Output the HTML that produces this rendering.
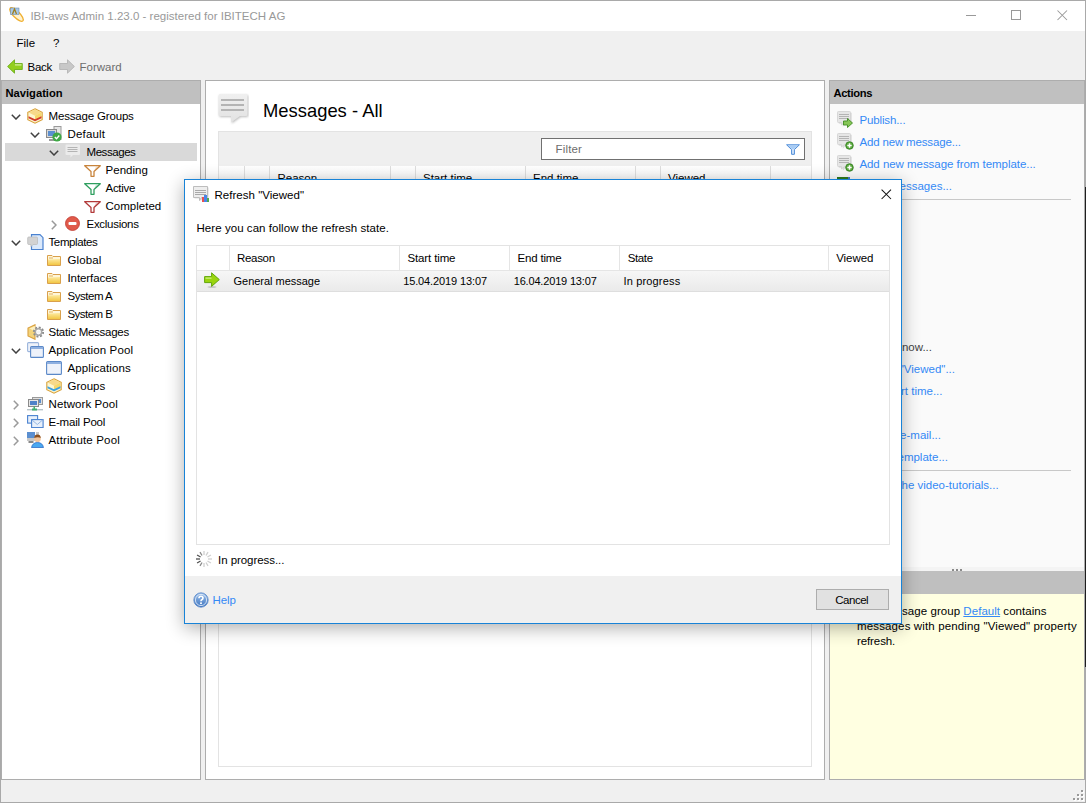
<!DOCTYPE html>
<html><head><meta charset="utf-8">
<style>
*{box-sizing:border-box;margin:0;padding:0}
html,body{width:1086px;height:803px;overflow:hidden}
body{position:relative;background:#f0f0f0;font-family:"Liberation Sans",sans-serif;font-size:11.5px;color:#000}
.a{position:absolute;display:block}
.t{position:absolute;white-space:nowrap;line-height:14px}
</style></head><body>
<div class="a" style="left:0px;top:0px;width:1086px;height:803px;border:1px solid #a9a9a9"></div>
<div class="a" style="left:1px;top:1px;width:1084px;height:30px;background:#fff"></div>
<svg class="a" style="left:8px;top:6px" width="17" height="17" viewBox="0 0 17 17"><ellipse cx="8.5" cy="8.5" rx="9" ry="3.2" transform="rotate(45 8.5 8.5)" fill="#fff2d0" stroke="#f0b030" stroke-width="1.3"/><rect x="2.5" y="2" width="8.5" height="6.5" fill="#a8c8e8" stroke="#6080a0" stroke-width="0.5"/><path d="M4.5 8 L6.5 3 L8.5 8" fill="none" stroke="#a08020" stroke-width="1.3"/></svg>
<div class="t" style="left:30.4px;top:9.02px;font-size:11.5px;line-height:14px;color:#999;letter-spacing:0.013px;">IBI-aws Admin 1.23.0 - registered for IBITECH AG</div>
<div class="a" style="left:966px;top:15px;width:10px;height:1px;background:#999"></div>
<div class="a" style="left:1011px;top:10px;width:10px;height:10px;border:1px solid #999"></div>
<svg class="a" style="left:1057px;top:10px" width="11" height="11" viewBox="0 0 11 11"><path d="M0.5 0.5 L10 10 M10 0.5 L0.5 10" stroke="#999" stroke-width="1.05"/></svg>
<div class="t" style="left:16.5px;top:36.02px;font-size:11.5px;line-height:14px;">File</div>
<div class="t" style="left:53px;top:36.02px;font-size:11.5px;line-height:14px;">?</div>
<svg class="a" style="left:7px;top:59px" width="16" height="15" viewBox="0 0 16 15"><path d="M0.6 7.5 L7.5 0.8 L7.5 4.5 L15.3 4.5 L15.3 10.5 L7.5 10.5 L7.5 14.2 Z" fill="#93cf1e" stroke="#62a812" stroke-width="0.8"/><rect x="8" y="5.3" width="6.5" height="1.2" fill="#d8f0a8"/></svg>
<div class="t" style="left:27.5px;top:60.02px;font-size:11.5px;line-height:14px;;letter-spacing:-0.270px;">Back</div>
<svg class="a" style="left:59px;top:59px" width="16" height="15" viewBox="0 0 16 15"><path d="M15.4 7.5 L8.5 0.8 L8.5 4.5 L0.7 4.5 L0.7 10.5 L8.5 10.5 L8.5 14.2 Z" fill="#c8c8c8" stroke="#b0b0b0" stroke-width="0.8"/></svg>
<div class="t" style="left:79.5px;top:60.02px;font-size:11.5px;line-height:14px;color:#6d6d6d;letter-spacing:0.002px;">Forward</div>
<div class="a" style="left:1px;top:80px;width:200px;height:700px;border:1px solid #adadad;background:#fff"></div>
<div class="a" style="left:2px;top:81px;width:198px;height:23px;background:#c0c0c0"></div>
<div class="t" style="left:5.5px;top:86.12px;font-size:11.2px;line-height:14px;font-weight:bold;;letter-spacing:-0.010px;">Navigation</div>
<div class="a" style="left:5px;top:143px;width:192px;height:18px;background:#d9d9d9"></div>
<svg class="a" style="left:10.5px;top:114px" width="10" height="6" viewBox="0 0 10 6"><path d="M0.8 0.8 L5 5 L9.2 0.8" fill="none" stroke="#404040" stroke-width="1.5"/></svg>
<svg class="a" style="left:27px;top:108px" width="16" height="16" viewBox="0 0 16 16"><path d="M8 0.8 L15.2 4.3 L15.2 11.7 L8 15.2 L0.8 11.7 L0.8 4.3 Z" fill="#fdf6d0" stroke="#d8a23c" stroke-width="1.1"/><path d="M1.6 4.6 L8 7.8 L14.4 4.6 L8 1.6 Z" fill="#f7d98a"/><path d="M8 7.8 L14.4 4.6 L14.4 9 L8 12 Z" fill="#f4cf50" opacity="0.8"/><path d="M1.5 8.3 L8 11.3 L14.5 8.3 L14.5 10.2 L8 13.2 L1.5 10.2 Z" fill="#d23a2a"/></svg>
<div class="t" style="left:48.5px;top:109.02px;font-size:11.5px;line-height:14px;;letter-spacing:-0.170px;">Message Groups</div>
<svg class="a" style="left:29.5px;top:132px" width="10" height="6" viewBox="0 0 10 6"><path d="M0.8 0.8 L5 5 L9.2 0.8" fill="none" stroke="#404040" stroke-width="1.5"/></svg>
<svg class="a" style="left:46px;top:126px" width="16" height="16" viewBox="0 0 16 16"><rect x="8" y="0.5" width="7" height="13" fill="#e6e6e6" stroke="#9a9a9a"/><rect x="0.5" y="3.5" width="10" height="8" fill="#d8d8d8" stroke="#8a8a8a"/><rect x="2" y="5" width="7" height="5" fill="#5b8fd0"/><rect x="3" y="13" width="6" height="2" fill="#9a9a9a"/><circle cx="11" cy="11" r="4.6" fill="#3fa845"/><path d="M8.8 11 L10.5 12.7 L13.3 9.5" fill="none" stroke="#fff" stroke-width="1.3"/></svg>
<div class="t" style="left:67.5px;top:127.02px;font-size:11.5px;line-height:14px;;letter-spacing:0.166px;">Default</div>
<svg class="a" style="left:48.5px;top:150px" width="10" height="6" viewBox="0 0 10 6"><path d="M0.8 0.8 L5 5 L9.2 0.8" fill="none" stroke="#404040" stroke-width="1.5"/></svg>
<svg class="a" style="left:65px;top:144px" width="17" height="16" viewBox="0 0 17 16"><path d="M1.5 2 Q1.5 1 2.5 1 L15 1 Q16 1 16 2 L16 11 Q16 12 15 12 L9 12 L6.5 14.5 L6.5 12 L2.5 12 Q1.5 12 1.5 11 Z" fill="#d8d8d8" opacity="0.6"/><path d="M0.5 1.5 Q0.5 0.5 1.5 0.5 L14 0.5 Q15 0.5 15 1.5 L15 10 Q15 11 14 11 L8 11 L5.5 13.5 L5.5 11 L1.5 11 Q0.5 11 0.5 10 Z" fill="#ebebeb"/><rect x="2.5" y="3" width="10" height="1" fill="#b4b4b4"/><rect x="2.5" y="5" width="10" height="1" fill="#b4b4b4"/><rect x="2.5" y="7" width="10" height="1" fill="#b4b4b4"/></svg>
<div class="t" style="left:86.5px;top:145.02px;font-size:11.5px;line-height:14px;;letter-spacing:-0.440px;">Messages</div>
<svg class="a" style="left:83.5px;top:165px" width="17" height="12" viewBox="0 0 17 12"><path d="M0.7 0.7 L16.3 0.7 L10 6.5 L10 11.3 L7 11.3 L7 6.5 Z" fill="#fff" stroke="#c8843c" stroke-width="1.3" stroke-linejoin="round"/><path d="M12 1.5 L15 1.5 L10 6 Z" fill="#c8843c" opacity="0.25"/></svg>
<div class="t" style="left:105.5px;top:163.02px;font-size:11.5px;line-height:14px;;letter-spacing:0.040px;">Pending</div>
<svg class="a" style="left:83.5px;top:183px" width="17" height="12" viewBox="0 0 17 12"><path d="M0.7 0.7 L16.3 0.7 L10 6.5 L10 11.3 L7 11.3 L7 6.5 Z" fill="#fff" stroke="#2f9f5f" stroke-width="1.3" stroke-linejoin="round"/><path d="M12 1.5 L15 1.5 L10 6 Z" fill="#2f9f5f" opacity="0.25"/></svg>
<div class="t" style="left:105.5px;top:181.02px;font-size:11.5px;line-height:14px;;letter-spacing:-0.288px;">Active</div>
<svg class="a" style="left:83.5px;top:201px" width="17" height="12" viewBox="0 0 17 12"><path d="M0.7 0.7 L16.3 0.7 L10 6.5 L10 11.3 L7 11.3 L7 6.5 Z" fill="#fff" stroke="#b23a3a" stroke-width="1.3" stroke-linejoin="round"/><path d="M12 1.5 L15 1.5 L10 6 Z" fill="#b23a3a" opacity="0.25"/></svg>
<div class="t" style="left:105.5px;top:199.02px;font-size:11.5px;line-height:14px;;letter-spacing:0.019px;">Completed</div>
<svg class="a" style="left:51.0px;top:220px" width="6" height="10" viewBox="0 0 6 10"><path d="M0.8 0.8 L5 5 L0.8 9.2" fill="none" stroke="#9a9a9a" stroke-width="1.5"/></svg>
<svg class="a" style="left:65px;top:216px" width="16" height="16" viewBox="0 0 16 16"><circle cx="7.5" cy="7.5" r="7" fill="#e05a4a" stroke="#c03a30" stroke-width="0.8"/><rect x="3.5" y="6" width="8" height="3" rx="1" fill="#fff"/></svg>
<div class="t" style="left:86.5px;top:217.02px;font-size:11.5px;line-height:14px;;letter-spacing:-0.287px;">Exclusions</div>
<svg class="a" style="left:10.5px;top:240px" width="10" height="6" viewBox="0 0 10 6"><path d="M0.8 0.8 L5 5 L9.2 0.8" fill="none" stroke="#404040" stroke-width="1.5"/></svg>
<svg class="a" style="left:27px;top:234px" width="17" height="17" viewBox="0 0 17 17"><path d="M4.5 0.7 L13 0.7 L16 3.7 L16 15.5 L4.5 15.5 Z" fill="#dbe9fb" stroke="#4a82d0" stroke-width="1.2"/><path d="M0.7 4 Q0.7 3 1.7 3 L9.5 3 Q10.5 3 10.5 4 L10.5 9.5 Q10.5 10.5 9.5 10.5 L6 10.5 L4 12.5 L4 10.5 L1.7 10.5 Q0.7 10.5 0.7 9.5 Z" fill="#d2d2d2" stroke="#bdbdbd" stroke-width="0.8"/></svg>
<div class="t" style="left:48.5px;top:235.02px;font-size:11.5px;line-height:14px;;letter-spacing:-0.380px;">Templates</div>
<svg class="a" style="left:46.5px;top:255px" width="15" height="12" viewBox="0 0 15 12"><defs><linearGradient id="fg" x1="0" y1="0" x2="0" y2="1"><stop offset="0" stop-color="#fdeaa0"/><stop offset="1" stop-color="#f2c644"/></linearGradient></defs><path d="M0.5 0.5 L5 0.5 L6 1.5 L13.5 1.5 L13.5 10.5 L0.5 10.5 Z" fill="#fff6d8" stroke="#d9a04c" stroke-width="1"/><rect x="2" y="2.5" width="4" height="1" fill="#e0b060"/><path d="M1 4.5 L13 4 L13 10 L1 10 Z" fill="url(#fg)"/></svg>
<div class="t" style="left:67.5px;top:253.02px;font-size:11.5px;line-height:14px;;letter-spacing:0.092px;">Global</div>
<svg class="a" style="left:46.5px;top:273px" width="15" height="12" viewBox="0 0 15 12"><defs><linearGradient id="fg" x1="0" y1="0" x2="0" y2="1"><stop offset="0" stop-color="#fdeaa0"/><stop offset="1" stop-color="#f2c644"/></linearGradient></defs><path d="M0.5 0.5 L5 0.5 L6 1.5 L13.5 1.5 L13.5 10.5 L0.5 10.5 Z" fill="#fff6d8" stroke="#d9a04c" stroke-width="1"/><rect x="2" y="2.5" width="4" height="1" fill="#e0b060"/><path d="M1 4.5 L13 4 L13 10 L1 10 Z" fill="url(#fg)"/></svg>
<div class="t" style="left:67.5px;top:271.02px;font-size:11.5px;line-height:14px;;letter-spacing:-0.080px;">Interfaces</div>
<svg class="a" style="left:46.5px;top:291px" width="15" height="12" viewBox="0 0 15 12"><defs><linearGradient id="fg" x1="0" y1="0" x2="0" y2="1"><stop offset="0" stop-color="#fdeaa0"/><stop offset="1" stop-color="#f2c644"/></linearGradient></defs><path d="M0.5 0.5 L5 0.5 L6 1.5 L13.5 1.5 L13.5 10.5 L0.5 10.5 Z" fill="#fff6d8" stroke="#d9a04c" stroke-width="1"/><rect x="2" y="2.5" width="4" height="1" fill="#e0b060"/><path d="M1 4.5 L13 4 L13 10 L1 10 Z" fill="url(#fg)"/></svg>
<div class="t" style="left:67.5px;top:289.02px;font-size:11.5px;line-height:14px;;letter-spacing:-0.472px;">System A</div>
<svg class="a" style="left:46.5px;top:309px" width="15" height="12" viewBox="0 0 15 12"><defs><linearGradient id="fg" x1="0" y1="0" x2="0" y2="1"><stop offset="0" stop-color="#fdeaa0"/><stop offset="1" stop-color="#f2c644"/></linearGradient></defs><path d="M0.5 0.5 L5 0.5 L6 1.5 L13.5 1.5 L13.5 10.5 L0.5 10.5 Z" fill="#fff6d8" stroke="#d9a04c" stroke-width="1"/><rect x="2" y="2.5" width="4" height="1" fill="#e0b060"/><path d="M1 4.5 L13 4 L13 10 L1 10 Z" fill="url(#fg)"/></svg>
<div class="t" style="left:67.5px;top:307.02px;font-size:11.5px;line-height:14px;;letter-spacing:-0.552px;">System B</div>
<svg class="a" style="left:27px;top:324px" width="17" height="16" viewBox="0 0 17 16"><path d="M8 0.7 L1 4 L1 12 L8 15.3 Z" fill="#f3d37a" stroke="#d9a040" stroke-width="1.1"/><path d="M8 2 L2.5 4.5 L8 7.5 Z" fill="#fdf0c0"/><circle cx="11.5" cy="8" r="4.4" fill="none" stroke="#8c8c8c" stroke-width="2.4" stroke-dasharray="1.9 1.5"/><circle cx="11.5" cy="8" r="3.2" fill="none" stroke="#a8a8a8" stroke-width="1.5"/><circle cx="11.5" cy="8" r="1.6" fill="#f4f4f4"/></svg>
<div class="t" style="left:48.5px;top:325.02px;font-size:11.5px;line-height:14px;;letter-spacing:-0.258px;">Static Messages</div>
<svg class="a" style="left:10.5px;top:348px" width="10" height="6" viewBox="0 0 10 6"><path d="M0.8 0.8 L5 5 L9.2 0.8" fill="none" stroke="#404040" stroke-width="1.5"/></svg>
<svg class="a" style="left:27px;top:342px" width="17" height="16" viewBox="0 0 17 16"><rect x="0.6" y="0.6" width="11" height="9" rx="1" fill="#eef2fa" stroke="#9ab4dc" stroke-width="1.1"/><rect x="3.6" y="4.6" width="12.8" height="10.8" rx="1" fill="#eef2fa" stroke="#5a88c8" stroke-width="1.1"/><rect x="4" y="5" width="12" height="2" fill="#8fb0e0"/></svg>
<div class="t" style="left:48.5px;top:343.02px;font-size:11.5px;line-height:14px;;letter-spacing:0.138px;">Application Pool</div>
<svg class="a" style="left:46px;top:361px" width="16" height="14" viewBox="0 0 16 14"><rect x="0.6" y="0.6" width="14.8" height="12.8" rx="1" fill="#eef2fa" stroke="#5a88c8" stroke-width="1.1"/><rect x="1" y="1" width="14" height="2" fill="#8fb0e0"/></svg>
<div class="t" style="left:67.5px;top:361.02px;font-size:11.5px;line-height:14px;;letter-spacing:0.115px;">Applications</div>
<svg class="a" style="left:46px;top:378px" width="16" height="16" viewBox="0 0 16 16"><path d="M8 0.8 L15.2 4.3 L15.2 11.7 L8 15.2 L0.8 11.7 L0.8 4.3 Z" fill="#fdf6d0" stroke="#d8a23c" stroke-width="1.1"/><path d="M1.6 4.6 L8 7.8 L14.4 4.6 L8 1.6 Z" fill="#f7d98a"/><path d="M8 7.8 L14.4 4.6 L14.4 9 L8 12 Z" fill="#f4cf50" opacity="0.8"/><path d="M1.5 8.3 L8 11.3 L14.5 8.3 L14.5 10.2 L8 13.2 L1.5 10.2 Z" fill="#3aa0e0"/></svg>
<div class="t" style="left:67.5px;top:379.02px;font-size:11.5px;line-height:14px;;letter-spacing:-0.003px;">Groups</div>
<svg class="a" style="left:13.0px;top:400px" width="6" height="10" viewBox="0 0 6 10"><path d="M0.8 0.8 L5 5 L0.8 9.2" fill="none" stroke="#9a9a9a" stroke-width="1.5"/></svg>
<svg class="a" style="left:27px;top:397px" width="16" height="14" viewBox="0 0 16 14"><rect x="5.5" y="0.5" width="10" height="7" fill="#e0e0e0" stroke="#9a9a9a"/><rect x="7" y="2" width="7" height="4" fill="#5b8fd0"/><rect x="1.5" y="2.5" width="10" height="7" fill="#e6e6e6" stroke="#8a8a8a"/><rect x="3" y="4" width="7" height="4" fill="#4f82c8"/><rect x="0" y="12" width="16" height="1.4" fill="#b8c4c8"/><rect x="5" y="11.5" width="5" height="2" fill="#40b070"/><rect x="6.5" y="9.5" width="1.5" height="3" fill="#40b070"/></svg>
<div class="t" style="left:48.5px;top:397.02px;font-size:11.5px;line-height:14px;;letter-spacing:0.092px;">Network Pool</div>
<svg class="a" style="left:13.0px;top:418px" width="6" height="10" viewBox="0 0 6 10"><path d="M0.8 0.8 L5 5 L0.8 9.2" fill="none" stroke="#9a9a9a" stroke-width="1.5"/></svg>
<svg class="a" style="left:27px;top:415px" width="17" height="13" viewBox="0 0 17 13"><rect x="0.6" y="0.6" width="10" height="7.5" fill="#e8f0fb" stroke="#4a82d0" stroke-width="1.1"/><rect x="4.6" y="4.6" width="11.5" height="8" fill="#e8f0fb" stroke="#4a82d0" stroke-width="1.1"/><path d="M5 5 L10.3 9.5 L15.6 5" fill="none" stroke="#8ab0e0" stroke-width="0.9"/></svg>
<div class="t" style="left:48.5px;top:415.02px;font-size:11.5px;line-height:14px;;letter-spacing:-0.192px;">E-mail Pool</div>
<svg class="a" style="left:13.0px;top:436px" width="6" height="10" viewBox="0 0 6 10"><path d="M0.8 0.8 L5 5 L0.8 9.2" fill="none" stroke="#9a9a9a" stroke-width="1.5"/></svg>
<svg class="a" style="left:27px;top:432px" width="17" height="16" viewBox="0 0 17 16"><rect x="0" y="0" width="8" height="6" fill="#5b8fd0"/><rect x="0" y="6" width="8" height="3" fill="#c8c8c8"/><rect x="1.5" y="9" width="5" height="2" fill="#888"/><rect x="9" y="0" width="3" height="10" fill="#c8c8c8"/><circle cx="10.5" cy="6.8" r="3.3" fill="#f2c49a"/><path d="M7.2 6 Q7.5 2.6 10.5 2.6 Q13.5 2.6 13.8 6 Q11 4.5 7.2 6Z" fill="#8a5020"/><path d="M4.5 15.5 Q5.5 10.5 10.5 10.5 Q15.5 10.5 16.5 15.5 Z" fill="#4aa8f0" stroke="#2060c0" stroke-width="0.7"/></svg>
<div class="t" style="left:48.5px;top:433.02px;font-size:11.5px;line-height:14px;;letter-spacing:0.175px;">Attribute Pool</div>
<div class="a" style="left:205px;top:80px;width:620px;height:700px;border:1px solid #adadad;background:#fff"></div>
<svg class="a" style="left:217px;top:93px" width="32" height="32" viewBox="0 0 32 32"><defs><filter id="sh" x="-20%" y="-20%" width="140%" height="140%"><feGaussianBlur stdDeviation="0.9"/></filter><linearGradient id="bg1" x1="0" y1="0" x2="0" y2="1"><stop offset="0" stop-color="#f0f0f0"/><stop offset="1" stop-color="#e2e2e2"/></linearGradient></defs><path d="M1.5 2.5 Q1.5 1 3 1 L29 1 Q30.5 1 30.5 2.5 L30.5 21.5 Q30.5 23 29 23 L23 23 L14 29.5 L14 23 L3 23 Q1.5 23 1.5 21.5 Z" fill="#bdbdbd" filter="url(#sh)" transform="translate(0.8,1)"/><path d="M1.5 2.5 Q1.5 1 3 1 L29 1 Q30.5 1 30.5 2.5 L30.5 21.5 Q30.5 23 29 23 L23 23 L14 29.5 L14 23 L3 23 Q1.5 23 1.5 21.5 Z" fill="url(#bg1)"/><rect x="4" y="6" width="23" height="2" fill="#b4b4b4"/><rect x="4" y="11" width="23" height="2" fill="#b4b4b4"/><rect x="4" y="16" width="23" height="2" fill="#b4b4b4"/></svg>
<div class="t" style="left:263px;top:99.62px;font-size:18.4px;line-height:22px;;letter-spacing:0.000px;">Messages - All</div>
<div class="a" style="left:218px;top:131px;width:594px;height:636px;border:1px solid #e3e3e3;background:#fff"></div>
<div class="a" style="left:219px;top:132px;width:592px;height:34px;background:#efefef"></div>
<div class="a" style="left:541px;top:138px;width:264px;height:22px;border:1px solid #707070;background:#fff"></div>
<div class="t" style="left:555.6px;top:142.02px;font-size:11.5px;line-height:14px;color:#6d6d6d;;letter-spacing:0.140px;">Filter</div>
<svg class="a" style="left:786px;top:144px" width="14" height="11" viewBox="0 0 14 11"><path d="M0.6 0.8 L13.4 0.8 L8.4 5.6 L8.4 10.3 L5.6 10.3 L5.6 5.6 Z" fill="#d4e6fb" stroke="#4a8ad8" stroke-width="1" stroke-linejoin="round"/><path d="M2 1.5 L12 1.5 L8 5 L6 5Z" fill="#a8ccf4"/></svg>
<div class="a" style="left:219px;top:166px;width:592px;height:25px;background:linear-gradient(#ffffff,#f3f3f3)"></div>
<div class="a" style="left:244px;top:166px;width:1px;height:25px;background:#dedede"></div>
<div class="a" style="left:269px;top:166px;width:1px;height:25px;background:#dedede"></div>
<div class="a" style="left:390px;top:166px;width:1px;height:25px;background:#dedede"></div>
<div class="a" style="left:415px;top:166px;width:1px;height:25px;background:#dedede"></div>
<div class="a" style="left:525px;top:166px;width:1px;height:25px;background:#dedede"></div>
<div class="a" style="left:635px;top:166px;width:1px;height:25px;background:#dedede"></div>
<div class="a" style="left:660px;top:166px;width:1px;height:25px;background:#dedede"></div>
<div class="a" style="left:770px;top:166px;width:1px;height:25px;background:#dedede"></div>
<div class="t" style="left:277.5px;top:171.02px;font-size:11.5px;line-height:14px;">Reason</div>
<div class="t" style="left:423px;top:171.02px;font-size:11.5px;line-height:14px;">Start time</div>
<div class="t" style="left:533px;top:171.02px;font-size:11.5px;line-height:14px;">End time</div>
<div class="t" style="left:668px;top:171.02px;font-size:11.5px;line-height:14px;">Viewed</div>
<div class="a" style="left:829px;top:80px;width:256px;height:700px;border:1px solid #adadad;background:#fafafa"></div>
<div class="a" style="left:830px;top:81px;width:254px;height:23px;background:#c0c0c0"></div>
<div class="t" style="left:833.5px;top:86.12px;font-size:11.2px;line-height:14px;font-weight:bold;;letter-spacing:-0.362px;">Actions</div>
<div class="t" style="left:859.4px;top:113.02px;font-size:11.5px;line-height:14px;color:#3489f6;;letter-spacing:-0.121px;">Publish...</div>
<svg class="a" style="left:837px;top:111px" width="17" height="17" viewBox="0 0 17 17"><path d="M1 1 L14 1 L14 12 L8 12 L5 15 L5 12 L1 12 Z" fill="#9a9a9a" opacity="0.3" transform="translate(0.8,0.8)"/><path d="M0.5 1.5 Q0.5 0.5 1.5 0.5 L12.5 0.5 Q13.5 0.5 13.5 1.5 L13.5 10.5 Q13.5 11.5 12.5 11.5 L7.5 11.5 L4.5 14 L4.5 11.5 L1.5 11.5 Q0.5 11.5 0.5 10.5 Z" fill="#e6e6e6" stroke="#d0d0d0" stroke-width="0.8"/><rect x="2" y="3" width="10" height="1" fill="#b4b4b4"/><rect x="2" y="5" width="10" height="1" fill="#b4b4b4"/><rect x="2" y="7" width="10" height="1" fill="#b4b4b4"/><path d="M6.5 10 L10.5 10 L10.5 7.5 L15.5 12 L10.5 16.5 L10.5 14 L6.5 14 Z" fill="#86c656" stroke="#3f8c22" stroke-width="0.9"/></svg>
<div class="t" style="left:859.4px;top:135.02px;font-size:11.5px;line-height:14px;color:#3489f6;;letter-spacing:-0.156px;">Add new message...</div>
<svg class="a" style="left:837px;top:133px" width="17" height="17" viewBox="0 0 17 17"><path d="M1 1 L14 1 L14 12 L8 12 L5 15 L5 12 L1 12 Z" fill="#9a9a9a" opacity="0.3" transform="translate(0.8,0.8)"/><path d="M0.5 1.5 Q0.5 0.5 1.5 0.5 L12.5 0.5 Q13.5 0.5 13.5 1.5 L13.5 10.5 Q13.5 11.5 12.5 11.5 L7.5 11.5 L4.5 14 L4.5 11.5 L1.5 11.5 Q0.5 11.5 0.5 10.5 Z" fill="#e6e6e6" stroke="#d0d0d0" stroke-width="0.8"/><rect x="2" y="3" width="10" height="1" fill="#b4b4b4"/><rect x="2" y="5" width="10" height="1" fill="#b4b4b4"/><rect x="2" y="7" width="10" height="1" fill="#b4b4b4"/><circle cx="12.5" cy="12.5" r="3.8" fill="#5aaa3c" stroke="#2f7a1c" stroke-width="0.8"/><path d="M12.5 10.3 L12.5 14.7 M10.3 12.5 L14.7 12.5" stroke="#fff" stroke-width="1.5"/></svg>
<div class="t" style="left:859.4px;top:157.02px;font-size:11.5px;line-height:14px;color:#3489f6;;letter-spacing:-0.041px;">Add new message from template...</div>
<svg class="a" style="left:837px;top:155px" width="17" height="17" viewBox="0 0 17 17"><path d="M1 1 L14 1 L14 12 L8 12 L5 15 L5 12 L1 12 Z" fill="#9a9a9a" opacity="0.3" transform="translate(0.8,0.8)"/><path d="M0.5 1.5 Q0.5 0.5 1.5 0.5 L12.5 0.5 Q13.5 0.5 13.5 1.5 L13.5 10.5 Q13.5 11.5 12.5 11.5 L7.5 11.5 L4.5 14 L4.5 11.5 L1.5 11.5 Q0.5 11.5 0.5 10.5 Z" fill="#e6e6e6" stroke="#d0d0d0" stroke-width="0.8"/><rect x="2" y="3" width="10" height="1" fill="#b4b4b4"/><rect x="2" y="5" width="10" height="1" fill="#b4b4b4"/><rect x="2" y="7" width="10" height="1" fill="#b4b4b4"/><circle cx="12.5" cy="12.5" r="3.8" fill="#5aaa3c" stroke="#2f7a1c" stroke-width="0.8"/><path d="M12.5 10.3 L12.5 14.7 M10.3 12.5 L14.7 12.5" stroke="#fff" stroke-width="1.5"/></svg>
<div class="t" style="right:134px;top:179.02px;font-size:11.5px;line-height:14px;color:#3489f6">Import messages...</div>
<div class="a" style="left:837px;top:177px;width:11px;height:2.5px;background:#2f7a1c"></div>
<div class="a" style="left:848px;top:177px;width:2px;height:2px;background:#4a78c8"></div>
<div class="a" style="left:838px;top:199px;width:233px;height:1px;background:#c8c8c8"></div>
<div class="a" style="left:838px;top:470px;width:233px;height:1px;background:#c8c8c8"></div>
<div class="t" style="right:154px;top:340.02px;font-size:11.5px;line-height:14px;color:#444">Publish now...</div>
<div class="t" style="right:131px;top:361.52px;font-size:11.5px;line-height:14px;color:#3489f6">Set "Viewed"...</div>
<div class="t" style="right:143.5px;top:383.52px;font-size:11.5px;line-height:14px;color:#3489f6">Set start time...</div>
<div class="t" style="right:145px;top:428.02px;font-size:11.5px;line-height:14px;color:#3489f6">Send e-mail...</div>
<div class="t" style="right:138px;top:450.02px;font-size:11.5px;line-height:14px;color:#3489f6">Save as template...</div>
<div class="t" style="right:87.29999999999995px;top:478.02px;font-size:11.5px;line-height:14px;color:#3489f6">Watch the video-tutorials...</div>
<div class="a" style="left:830px;top:567px;width:254px;height:4px;background:#f4f4f4"></div>
<div class="a" style="left:830px;top:571px;width:254px;height:23px;background:#bfbfbf"></div>
<div class="a" style="left:952px;top:569px;width:2px;height:2px;background:#8a8a8a"></div>
<div class="a" style="left:956px;top:569px;width:2px;height:2px;background:#8a8a8a"></div>
<div class="a" style="left:960px;top:569px;width:2px;height:2px;background:#8a8a8a"></div>
<div class="a" style="left:830px;top:594px;width:254px;height:185px;background:#ffffe1"></div>
<div class="t" style="left:857px;top:604.02px;font-size:11.5px;line-height:14px;;letter-spacing:0.048px;">The message group <span style="color:#3489f6;text-decoration:underline">Default</span> contains</div>
<div class="t" style="left:857px;top:619.02px;font-size:11.5px;line-height:14px;;letter-spacing:0.138px;">messages with pending "Viewed" property</div>
<div class="t" style="left:857px;top:634.02px;font-size:11.5px;line-height:14px;;letter-spacing:-0.100px;">refresh.</div>
<div class="a" style="left:1082px;top:791px;width:2px;height:2px;background:#fff"></div>
<div class="a" style="left:1081px;top:790px;width:2px;height:2px;background:#999"></div>
<div class="a" style="left:1078px;top:795px;width:2px;height:2px;background:#fff"></div>
<div class="a" style="left:1077px;top:794px;width:2px;height:2px;background:#999"></div>
<div class="a" style="left:1082px;top:795px;width:2px;height:2px;background:#fff"></div>
<div class="a" style="left:1081px;top:794px;width:2px;height:2px;background:#999"></div>
<div class="a" style="left:1074px;top:799px;width:2px;height:2px;background:#fff"></div>
<div class="a" style="left:1073px;top:798px;width:2px;height:2px;background:#999"></div>
<div class="a" style="left:1078px;top:799px;width:2px;height:2px;background:#fff"></div>
<div class="a" style="left:1077px;top:798px;width:2px;height:2px;background:#999"></div>
<div class="a" style="left:1082px;top:799px;width:2px;height:2px;background:#fff"></div>
<div class="a" style="left:1081px;top:798px;width:2px;height:2px;background:#999"></div>
<div class="a" style="left:184px;top:179px;width:718px;height:445px;border:1px solid #1883d7;background:#fff;box-shadow:0 4px 17px rgba(0,0,0,0.32)"></div>
<div class="a" style="left:185px;top:576px;width:716px;height:47px;background:#f0f0f0"></div>
<div class="t" style="left:214.5px;top:188.02px;font-size:11.5px;line-height:14px;;letter-spacing:0.022px;">Refresh "Viewed"</div>
<svg class="a" style="left:193px;top:186px" width="17" height="17" viewBox="0 0 17 17"><path d="M1 1 L15 1 L15 12 L9 12 L7 15 L7 12 L1 12 Z" fill="#a0a0a0" opacity="0.35" transform="translate(0.6,0.6)"/><path d="M0.5 0.5 L14.5 0.5 L14.5 11.5 L8.5 11.5 L6.5 14.5 L6.5 11.5 L0.5 11.5 Z" fill="#eeeeee" stroke="#bdbdbd" stroke-width="1"/><rect x="2" y="4" width="11" height="1" fill="#a9a9a9"/><rect x="2" y="6" width="11" height="1" fill="#a9a9a9"/><rect x="2" y="8" width="11" height="1" fill="#a9a9a9"/><rect x="9" y="11" width="2" height="5" fill="#e85050"/><rect x="11" y="9" width="3" height="7" fill="#4a86e8"/><rect x="14" y="12" width="2" height="4" fill="#50a850"/></svg>
<svg class="a" style="left:195px;top:550px" width="18" height="18" viewBox="0 0 18 18"><line x1="13.00" y1="9.00" x2="17.00" y2="9.00" stroke="#cfcfcf" stroke-width="1.3"/><line x1="12.46" y1="11.00" x2="15.93" y2="13.00" stroke="#cfcfcf" stroke-width="1.3"/><line x1="11.00" y1="12.46" x2="13.00" y2="15.93" stroke="#cfcfcf" stroke-width="1.3"/><line x1="9.00" y1="13.00" x2="9.00" y2="17.00" stroke="#cfcfcf" stroke-width="1.3"/><line x1="7.00" y1="12.46" x2="5.00" y2="15.93" stroke="#8a8a8a" stroke-width="1.3"/><line x1="5.54" y1="11.00" x2="2.07" y2="13.00" stroke="#505050" stroke-width="1.3"/><line x1="5.00" y1="9.00" x2="1.00" y2="9.00" stroke="#505050" stroke-width="1.3"/><line x1="5.54" y1="7.00" x2="2.07" y2="5.00" stroke="#505050" stroke-width="1.3"/><line x1="7.00" y1="5.54" x2="5.00" y2="2.07" stroke="#8a8a8a" stroke-width="1.3"/><line x1="9.00" y1="5.00" x2="9.00" y2="1.00" stroke="#cfcfcf" stroke-width="1.3"/><line x1="11.00" y1="5.54" x2="13.00" y2="2.07" stroke="#cfcfcf" stroke-width="1.3"/><line x1="12.46" y1="7.00" x2="15.93" y2="5.00" stroke="#cfcfcf" stroke-width="1.3"/></svg>
<svg class="a" style="left:193px;top:592px" width="16" height="16" viewBox="0 0 16 16"><defs><linearGradient id="hg" x1="0" y1="0" x2="0" y2="1"><stop offset="0" stop-color="#9cc0ea"/><stop offset="1" stop-color="#3d74c0"/></linearGradient></defs><circle cx="8" cy="8" r="7.2" fill="url(#hg)" stroke="#5a88c8" stroke-width="0.8"/><circle cx="8" cy="8" r="5.6" fill="none" stroke="#e8f0fa" stroke-width="0.8"/><path d="M6 6.3 Q6 4.3 8 4.3 Q10 4.3 10 6.1 Q10 7.2 8.8 7.8 Q8 8.2 8 9.3" fill="none" stroke="#fff" stroke-width="1.6"/><rect x="7.1" y="10.4" width="1.8" height="1.7" fill="#fff"/></svg>
<svg class="a" style="left:881px;top:189px" width="11" height="11" viewBox="0 0 11 11"><path d="M0.6 0.6 L10 10 M10 0.6 L0.6 10" stroke="#111" stroke-width="1.05"/></svg>
<div class="t" style="left:196.5px;top:221.02px;font-size:11.5px;line-height:14px;;letter-spacing:0.053px;">Here you can follow the refresh state.</div>
<div class="a" style="left:196px;top:245px;width:694px;height:300px;border:1px solid #e3e3e3;background:#fff"></div>
<div class="a" style="left:197px;top:246px;width:692px;height:24px;background:#fff"></div>
<div class="a" style="left:197px;top:270px;width:692px;height:1px;background:#e5e5e5"></div>
<div class="a" style="left:229px;top:246px;width:1px;height:24px;background:#e5e5e5"></div>
<div class="a" style="left:399px;top:246px;width:1px;height:24px;background:#e5e5e5"></div>
<div class="a" style="left:509px;top:246px;width:1px;height:24px;background:#e5e5e5"></div>
<div class="a" style="left:619px;top:246px;width:1px;height:24px;background:#e5e5e5"></div>
<div class="a" style="left:828px;top:246px;width:1px;height:24px;background:#e5e5e5"></div>
<div class="a" style="left:197px;top:271px;width:692px;height:20px;background:linear-gradient(#f6f6f6,#eaeaea)"></div>
<div class="a" style="left:197px;top:291px;width:692px;height:1px;background:#dedede"></div>
<div class="t" style="left:237px;top:251.02px;font-size:11.5px;line-height:14px;;letter-spacing:-0.323px;">Reason</div>
<div class="t" style="left:407.4px;top:251.02px;font-size:11.5px;line-height:14px;;letter-spacing:-0.122px;">Start time</div>
<div class="t" style="left:517.5px;top:251.02px;font-size:11.5px;line-height:14px;;letter-spacing:-0.174px;">End time</div>
<div class="t" style="left:627.7px;top:251.02px;font-size:11.5px;line-height:14px;;letter-spacing:-0.372px;">State</div>
<div class="t" style="left:836.2px;top:251.02px;font-size:11.5px;line-height:14px;;letter-spacing:-0.053px;">Viewed</div>
<svg class="a" style="left:204px;top:272px" width="17" height="16" viewBox="0 0 17 16"><ellipse cx="8" cy="15" rx="4.5" ry="0.8" fill="#888" opacity="0.5"/><path d="M0.6 4.6 L7.6 4.6 L7.6 0.8 L15.3 7.6 L7.6 14.4 L7.6 10.6 L0.6 10.6 Z" fill="#9ad40e" stroke="#62a70a" stroke-width="1"/><rect x="1.5" y="5.6" width="6" height="1" fill="#d8f5a0"/></svg>
<div class="t" style="left:233.5px;top:274.19px;font-size:11px;line-height:14px;;letter-spacing:-0.022px;">General message</div>
<div class="t" style="left:403.2px;top:274.19px;font-size:11px;line-height:14px;;letter-spacing:-0.121px;">15.04.2019 13:07</div>
<div class="t" style="left:513.7px;top:274.19px;font-size:11px;line-height:14px;;letter-spacing:-0.171px;">16.04.2019 13:07</div>
<div class="t" style="left:623.5px;top:274.19px;font-size:11px;line-height:14px;;letter-spacing:0.161px;">In progress</div>
<div class="t" style="left:218.1px;top:553.02px;font-size:11.5px;line-height:14px;;letter-spacing:-0.066px;">In progress...</div>
<div class="t" style="left:212.6px;top:593.02px;font-size:11.5px;line-height:14px;color:#3489f6;;letter-spacing:-0.114px;">Help</div>
<div class="a" style="left:816px;top:589px;width:73px;height:21px;border:1px solid #adadad;background:#e1e1e1"></div>
<div class="t" style="left:835.2px;top:593.02px;font-size:11.5px;line-height:14px;;letter-spacing:-0.469px;">Cancel</div>
<div class="a" style="left:1085px;top:187px;width:1px;height:480px;background:#1e1e1e"></div>
</body></html>
